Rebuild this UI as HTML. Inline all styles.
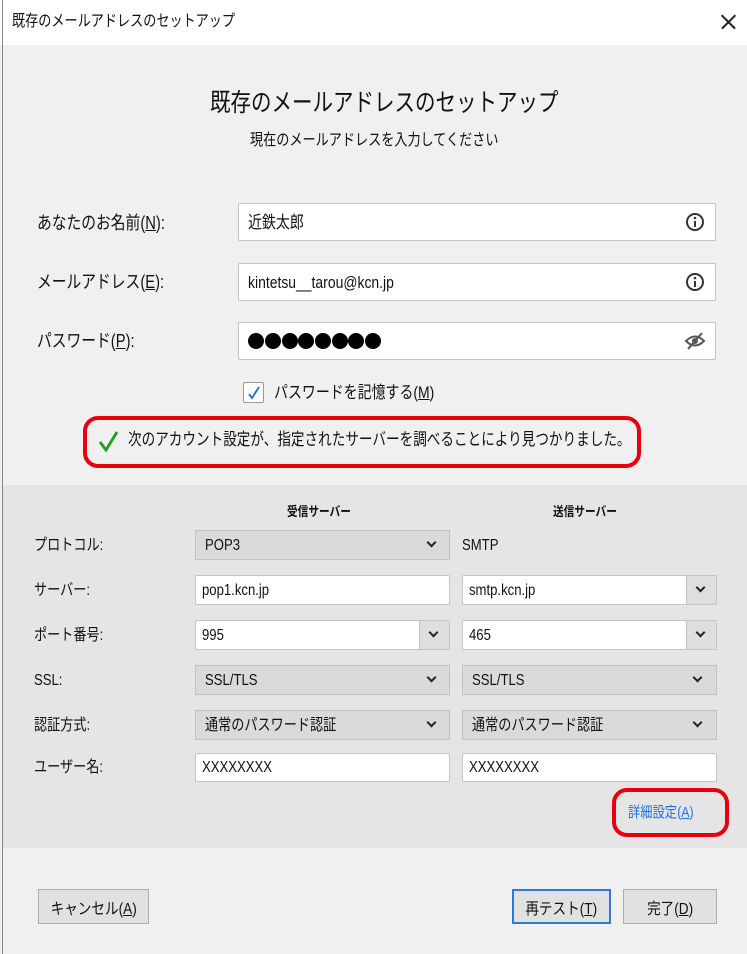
<!DOCTYPE html>
<html><head><meta charset="utf-8"><style>
*{margin:0;padding:0;box-sizing:border-box}
body{width:747px;height:954px;position:relative;background:#f0f0f0;font-family:"Liberation Sans","Noto Sans CJK JP",sans-serif;color:#111;overflow:hidden}
.a{position:absolute}
.t{position:absolute;white-space:nowrap;transform:scaleX(.82);transform-origin:left center;line-height:1}
.in{position:absolute;background:#fff;border:1px solid #c4c4c4;border-radius:2px}
.sel{position:absolute;background:#dadada;border:1px solid #c2c2c2}
.chev{position:absolute;width:7px;height:7px;border-right:2.5px solid #222;border-bottom:2.5px solid #222;transform:rotate(45deg)}
.btn{position:absolute;background:#e1e1e1;border:1px solid #adadad;font-size:16px;display:flex;align-items:center;justify-content:center}
.d{position:absolute;top:333px;width:16px;height:16px;border-radius:50%;background:#000}
u{text-decoration:underline}
</style></head><body>
<div class="a" style="left:0;top:0;width:747px;height:45px;background:#fff"></div>
<div class="a" style="left:2px;top:0;width:1px;height:954px;background:#888"></div>
<div class="t" style="left:12px;top:14px;font-size:16px">既存のメールアドレスのセットアップ</div>
<div class="a" style="left:719px;top:21px;width:19px;height:1.5px;background:#222;transform:rotate(45deg)"></div>
<div class="a" style="left:719px;top:21px;width:19px;height:1.5px;background:#222;transform:rotate(-45deg)"></div>

<div class="t" style="left:210px;top:91px;font-size:25px">既存のメールアドレスのセットアップ</div>
<div class="t" style="left:250px;top:133px;font-size:16px">現在のメールアドレスを入力してください</div>

<div class="t" style="left:37px;top:214px;font-size:18px">あなたのお名前(<u>N</u>):</div>
<div class="in" style="left:238px;top:203px;width:478px;height:38px"></div>
<div class="t" style="left:248px;top:214px;font-size:17px">近鉄太郎</div>
<div class="t" style="left:37px;top:273px;font-size:18px">メールアドレス(<u>E</u>):</div>
<div class="in" style="left:238px;top:263px;width:478px;height:38px"></div>
<div class="t" style="left:248px;top:274px;font-size:17px">kintetsu__tarou@kcn.jp</div>
<div class="t" style="left:37px;top:332px;font-size:18px">パスワード(<u>P</u>):</div>
<div class="in" style="left:238px;top:322px;width:478px;height:38px"></div>
<div class="d" style="left:248px"></div><div class="d" style="left:265px"></div><div class="d" style="left:282px"></div><div class="d" style="left:298px"></div>
<div class="d" style="left:315px"></div><div class="d" style="left:332px"></div><div class="d" style="left:348px"></div><div class="d" style="left:365px"></div>
<svg class="a" style="left:685px;top:212px" width="20" height="20"><circle cx="10" cy="10" r="8" fill="none" stroke="#333" stroke-width="2"/><rect x="9" y="9" width="2" height="6" fill="#333"/><circle cx="10" cy="6" r="1.3" fill="#333"/></svg>
<svg class="a" style="left:685px;top:272px" width="20" height="20"><circle cx="10" cy="10" r="8" fill="none" stroke="#333" stroke-width="2"/><rect x="9" y="9" width="2" height="6" fill="#333"/><circle cx="10" cy="6" r="1.3" fill="#333"/></svg>
<svg class="a" style="left:684px;top:331px" width="22" height="20"><path d="M2 10Q11 1 20 10Q11 19 2 10Z" fill="none" stroke="#555" stroke-width="2"/><circle cx="11" cy="10" r="3" fill="#555"/><path d="M4 18L18 2" stroke="#555" stroke-width="2"/></svg>

<div class="in" style="left:243px;top:382px;width:21px;height:21px;border-color:#999"></div>
<svg class="a" style="left:246px;top:385px" width="16" height="16"><path d="M3 9L6 13L13 2" fill="none" stroke="#1a6fd4" stroke-width="1.8"/></svg>
<div class="t" style="left:274px;top:384px;font-size:17px">パスワードを記憶する(<u>M</u>)</div>

<div class="a" style="left:83px;top:416px;width:558px;height:52px;border:4px solid #e8000b;border-radius:15px"></div>
<svg class="a" style="left:98px;top:429px" width="22" height="24"><path d="M2 13L8 21L19 3" fill="none" stroke="#1aa11a" stroke-width="2.8"/></svg>
<div class="t" style="left:128px;top:431px;font-size:17px;transform:scaleX(.8)">次のアカウント設定が、指定されたサーバーを調べることにより見つかりました。</div>

<div class="a" style="left:3px;top:485px;width:744px;height:363px;background:#e5e5e5"></div>
<div class="t" style="left:287px;top:505px;font-size:13px;font-weight:bold">受信サーバー</div>
<div class="t" style="left:553px;top:505px;font-size:13px;font-weight:bold">送信サーバー</div>

<div class="t" style="left:34px;top:538px;font-size:16px">プロトコル:</div>
<div class="t" style="left:34px;top:583px;font-size:16px">サーバー:</div>
<div class="t" style="left:34px;top:628px;font-size:16px">ポート番号:</div>
<div class="t" style="left:34px;top:673px;font-size:16px">SSL:</div>
<div class="t" style="left:34px;top:718px;font-size:16px">認証方式:</div>
<div class="t" style="left:34px;top:760px;font-size:16px">ユーザー名:</div>

<div class="sel" style="left:195px;top:530px;width:255px;height:30px"></div>
<div class="t" style="left:205px;top:538px;font-size:16px">POP3</div><div class="chev" style="left:428px;top:539px"></div>
<div class="t" style="left:462px;top:538px;font-size:16px">SMTP</div>

<div class="in" style="left:195px;top:575px;width:255px;height:30px"></div>
<div class="t" style="left:202px;top:583px;font-size:16px">pop1.kcn.jp</div>
<div class="in" style="left:462px;top:575px;width:255px;height:30px"></div>
<div class="a" style="left:686px;top:576px;width:30px;height:28px;background:#dedede;border-left:1px solid #c4c4c4"></div>
<div class="t" style="left:469px;top:583px;font-size:16px">smtp.kcn.jp</div><div class="chev" style="left:697px;top:584px"></div>

<div class="in" style="left:195px;top:620px;width:255px;height:30px"></div>
<div class="a" style="left:419px;top:621px;width:30px;height:28px;background:#dedede;border-left:1px solid #c4c4c4"></div>
<div class="t" style="left:202px;top:628px;font-size:16px">995</div><div class="chev" style="left:430px;top:629px"></div>
<div class="in" style="left:462px;top:620px;width:255px;height:30px"></div>
<div class="a" style="left:686px;top:621px;width:30px;height:28px;background:#dedede;border-left:1px solid #c4c4c4"></div>
<div class="t" style="left:469px;top:628px;font-size:16px">465</div><div class="chev" style="left:697px;top:629px"></div>

<div class="sel" style="left:195px;top:665px;width:255px;height:30px"></div>
<div class="t" style="left:205px;top:673px;font-size:16px">SSL/TLS</div><div class="chev" style="left:428px;top:674px"></div>
<div class="sel" style="left:462px;top:665px;width:255px;height:30px"></div>
<div class="t" style="left:472px;top:673px;font-size:16px">SSL/TLS</div><div class="chev" style="left:694px;top:674px"></div>

<div class="sel" style="left:195px;top:710px;width:255px;height:30px"></div>
<div class="t" style="left:205px;top:718px;font-size:16px">通常のパスワード認証</div><div class="chev" style="left:428px;top:719px"></div>
<div class="sel" style="left:462px;top:710px;width:255px;height:30px"></div>
<div class="t" style="left:472px;top:718px;font-size:16px">通常のパスワード認証</div><div class="chev" style="left:694px;top:719px"></div>

<div class="in" style="left:195px;top:753px;width:255px;height:29px"></div>
<div class="t" style="left:202px;top:760px;font-size:16px">XXXXXXXX</div>
<div class="in" style="left:462px;top:753px;width:255px;height:29px"></div>
<div class="t" style="left:469px;top:760px;font-size:16px">XXXXXXXX</div>

<div class="a" style="left:612px;top:788px;width:117px;height:49px;border:4px solid #e8000b;border-radius:15px"></div>
<div class="t" style="left:628px;top:805px;font-size:15px;color:#1a73e8">詳細設定(<u>A</u>)</div>

<div class="btn" style="left:38px;top:889px;width:111px;height:35px"><span style="transform:scaleX(.85);display:inline-block">キャンセル(<u>A</u>)</span></div>
<div class="btn" style="left:512px;top:889px;width:99px;height:35px;border:2px solid #2a7ad6"><span style="transform:scaleX(.85);display:inline-block">再テスト(<u>T</u>)</span></div>
<div class="btn" style="left:623px;top:889px;width:94px;height:35px"><span style="transform:scaleX(.85);display:inline-block">完了(<u>D</u>)</span></div>
</body></html>
